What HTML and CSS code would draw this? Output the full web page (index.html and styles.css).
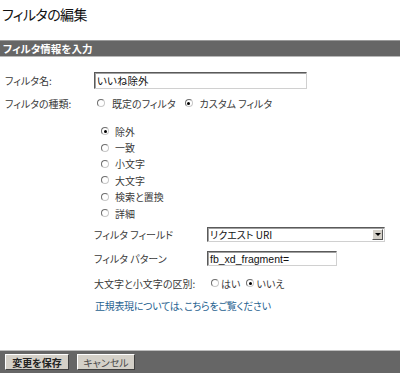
FILE: index.html
```html
<!DOCTYPE html>
<html lang="ja">
<head>
<meta charset="utf-8">
<title>フィルタの編集</title>
<link rel="stylesheet" href="styles.css">
</head>
<body>
<h1 class="title">フィルタの編集</h1>
<div class="section-bar">フィルタ情報を入力</div>
<div class="form">
  <div class="row row-name">
    <div class="label">フィルタ名:</div>
    <div class="textbox name-box">いいね除外</div>
  </div>
  <div class="row row-type">
    <div class="label">フィルタの種類:</div>
    <div class="opts">
      <span class="radio"></span><span class="opt-text">既定のフィルタ</span>
      <span class="radio checked"></span><span class="opt-text">カスタム フィルタ</span>
    </div>
  </div>
  <ul class="radio-list">
    <li><span class="radio checked"></span><span class="opt-text">除外</span></li>
    <li><span class="radio"></span><span class="opt-text">一致</span></li>
    <li><span class="radio"></span><span class="opt-text">小文字</span></li>
    <li><span class="radio"></span><span class="opt-text">大文字</span></li>
    <li><span class="radio"></span><span class="opt-text">検索と置換</span></li>
    <li><span class="radio"></span><span class="opt-text">詳細</span></li>
  </ul>
  <div class="sub">
    <div class="sub-row row-field">
      <div class="sub-label">フィルタ フィールド</div>
      <div class="select">
        <span class="select-text">リクエスト URI</span>
        <span class="select-btn"><span class="arrow"></span></span>
      </div>
    </div>
    <div class="sub-row row-pattern">
      <div class="sub-label">フィルタ パターン</div>
      <div class="textbox pattern-box">fb_xd_fragment=</div>
    </div>
    <div class="sub-row row-case">
      <div class="sub-label">大文字と小文字の区別:</div>
      <div class="case-opts">
        <span class="radio"></span><span class="case-text">はい</span>
        <span class="radio checked"></span><span class="case-text">いいえ</span>
      </div>
    </div>
  </div>
  <div class="link-row"><a class="link" href="#">正規表現については、こちらをご覧ください</a></div>
</div>
<div class="footer-bar">
  <button class="btn btn-save">変更を保存</button>
  <button class="btn btn-cancel">キャンセル</button>
</div>
</body>
</html>
```
FILE: styles.css
```css
html, body {
  margin: 0;
  padding: 0;
  background: #fff;
}
body {
  font-family: "Noto Sans CJK JP", "Liberation Sans", sans-serif;
  font-feature-settings: "palt";
  font-size: 10px;
  color: #3a3a3a;
  width: 400px;
  white-space: nowrap;
}
.title {
  margin: 0 0 12px 0;
  height: 28px;
  line-height: 28px;
  padding-left: 2px;
  font-size: 14px;
  letter-spacing: -0.6px;
  font-weight: normal;
  color: #111;
}
.section-bar {
  height: 15px;
  line-height: 15px;
  background: #666;
  border-top: 1px solid #9a9a9a;
  border-bottom: 1px solid #b8b8b8;
  color: #fff;
  font-weight: bold;
  font-size: 10.5px;
  padding-left: 3px;
}
.form {
  padding-top: 15px;
}
.row {
  display: flex;
  align-items: center;
  padding-left: 5px;
}
.label {
  width: 89px;
  flex: none;
}
.row-name { height: 17px; }
.row-type { height: 16px; margin-top: 6px; }
.textbox {
  box-sizing: border-box;
  background: #fff;
  border: 1px solid;
  border-color: #5a5a5a #d0d0d0 #d0d0d0 #5a5a5a;
  box-shadow: inset 1px 1px 0 #a0a0a0;
  color: #111;
  padding-left: 2px;
  font-family: "Liberation Sans", "Noto Sans CJK JP", sans-serif;
  font-size: 10.5px;
  display: flex;
  align-items: center;
}
.name-box {
  width: 213px;
  height: 17px;
  font-family: "Noto Sans CJK JP", sans-serif;
}
.opts {
  display: flex;
  align-items: center;
  padding-left: 3px;
}
.radio {
  box-sizing: border-box;
  width: 8px;
  height: 8px;
  border-radius: 50%;
  border: 1px solid;
  border-color: #6e6e6e #c8c8c8 #c8c8c8 #6e6e6e;
  background: #fff;
  display: inline-flex;
  align-items: center;
  justify-content: center;
  flex: none;
}
.radio.checked::after {
  content: "";
  width: 3px;
  height: 3px;
  border-radius: 50%;
  background: #000;
}
.opt-text {
  margin-left: 7px;
  margin-right: 9px;
}
.radio-list {
  list-style: none;
  margin: 12px 0 0 0;
  padding: 0 0 0 101px;
}
.radio-list li {
  height: 16.4px;
  display: flex;
  align-items: center;
}
.radio-list .opt-text { margin-left: 6px; }
.sub {
  margin-top: 6px;
  padding-left: 94px;
}
.sub-row {
  display: flex;
  align-items: center;
}
.sub-label {
  width: 113px;
  flex: none;
}
.row-field { height: 15px; }
.row-pattern { height: 15px; margin-top: 9px; }
.row-case { height: 16px; margin-top: 9px; }
.case-opts {
  display: flex;
  align-items: center;
  padding-left: 4px;
}
.case-text {
  margin-left: 2px;
  margin-right: 6px;
}
.select {
  box-sizing: border-box;
  width: 178px;
  height: 15px;
  border: 1px solid;
  border-color: #5a5a5a #d0d0d0 #d0d0d0 #5a5a5a;
  box-shadow: inset 1px 1px 0 #a0a0a0;
  display: flex;
  align-items: center;
  justify-content: space-between;
  color: #111;
}
.select-text { padding-left: 2px; }
.select-btn {
  box-sizing: border-box;
  width: 11px;
  height: 11px;
  margin-right: 1px;
  background: #d4d0c8;
  border: 1px solid;
  border-color: #fff #555 #555 #fff;
  display: flex;
  align-items: center;
  justify-content: center;
}
.arrow {
  width: 0;
  height: 0;
  border-left: 3px solid transparent;
  border-right: 3px solid transparent;
  border-top: 3px solid #000;
}
.pattern-box {
  width: 130px;
  height: 15px;
}
.link-row {
  margin-top: 7px;
  height: 16px;
  line-height: 16px;
  padding-left: 95px;
}
.link {
  color: #1f6290;
  text-decoration: none;
  letter-spacing: -0.3px;
}
.footer-bar {
  margin-top: 36px;
  box-sizing: border-box;
  height: 23px;
  background: #666;
  border-top: 1px solid #bdbdbd;
  display: flex;
  align-items: center;
  padding-left: 5px;
  gap: 8px;
}
.btn {
  box-sizing: border-box;
  height: 16px;
  padding: 0;
  margin: 0;
  background: #d4d0c8;
  border: 1px solid;
  border-color: #fff #404040 #404040 #fff;
  font-family: "Noto Sans CJK JP", "Liberation Sans", sans-serif;
  font-feature-settings: "palt";
  font-size: 10px;
  line-height: 13px;
  color: #222;
}
.btn-save {
  width: 64px;
  font-weight: bold;
}
.btn-cancel {
  width: 58px;
  color: #4a4a4a;
}
```
